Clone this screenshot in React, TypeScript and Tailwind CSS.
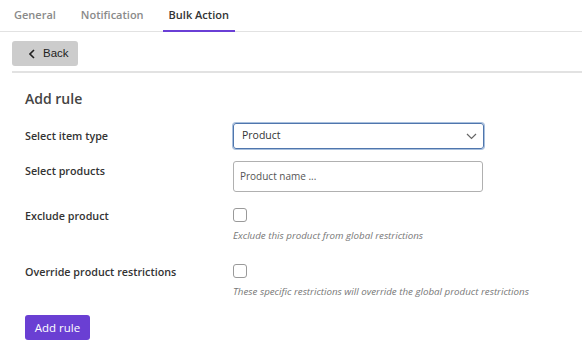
import React from "react";

export default function App() {
  const font = { fontFamily: '"Open Sans", "Noto Sans", sans-serif' };
  return (
    <div className="w-[582px] h-[362px] bg-white overflow-hidden text-[#333]" style={font}>
      <div className="flex h-[32px] border-b border-[#e2e2e2] pl-[8px] gap-[13px]">
        <div className="px-[6px] flex items-center h-[30px] text-[11px] font-semibold text-[#8a8a8a]">General</div>
        <div className="px-[6px] flex items-center h-[30px] text-[11px] font-semibold text-[#8a8a8a]">Notification</div>
        <div className="px-[6px] flex items-center h-[30px] text-[11px] font-semibold text-[#333] border-b-2 border-[#6a3fd6] box-content">Bulk Action</div>
      </div>
      <div className="ml-[12px] pt-[9px] pb-[5px] border-b-2 border-[#e2e2e2]">
        <button className="w-[66px] h-[25px] rounded-[3px] bg-[#cccccc] flex items-center pl-[17px] gap-[8px] text-[#222]" style={{ fontFamily: '"Liberation Sans", Arial, sans-serif' }}>
          <svg width="6" height="10" viewBox="0 0 6 10" fill="none"><path d="M5 1 L1 5 L5 9" stroke="#222" strokeWidth="1.6" /></svg>
          <span className="text-[11.5px]">Back</span>
        </button>
      </div>
      <div className="pl-[25px]">
        <div className="mt-[16px] text-[14px] font-semibold text-[#444] leading-[20px]">Add rule</div>
        <div className="flex items-center mt-[14px]">
          <div className="w-[208px] text-[10.75px] font-semibold text-[#333]">Select item type</div>
          <div className="w-[251px] h-[26px] rounded-[3px] border border-[#4f76ad] shadow-[0_0_0_1px_#a9c0dd] flex items-center justify-between pl-[8px] pr-[6px]">
            <span className="text-[10.5px] text-[#333]">Product</span>
            <svg width="11" height="7" viewBox="0 0 11 7" fill="none"><path d="M1 1 L5.5 5.5 L10 1" stroke="#666" strokeWidth="1.2" /></svg>
          </div>
        </div>
        <div className="flex items-start mt-[12px]">
          <div className="w-[208px] text-[10.75px] font-semibold text-[#333] pt-[2px]">Select products</div>
          <div className="w-[250px] h-[31px] rounded-[3px] border border-[#b0b0b0] flex items-center pl-[6px]">
            <span className="text-[10px] text-[#555]">Product name ...</span>
          </div>
        </div>
        <div className="flex items-start mt-[16px]">
          <div className="w-[208px] text-[10.75px] font-semibold text-[#333]">Exclude product</div>
          <div>
            <div className="w-[14px] h-[14px] rounded-[3px] border border-[#9a9a9a]" />
            <div className="mt-[7px] text-[9.75px] italic text-[#777]">Exclude this product from global restrictions</div>
          </div>
        </div>
        <div className="flex items-start mt-[20px]">
          <div className="w-[208px] text-[10.75px] font-semibold text-[#333]">Override product restrictions</div>
          <div>
            <div className="w-[14px] h-[14px] rounded-[3px] border border-[#9a9a9a]" />
            <div className="mt-[7px] text-[9.75px] italic text-[#777]">These specific restrictions will override the global product restrictions</div>
          </div>
        </div>
        <button className="mt-[16px] w-[65px] h-[25px] rounded-[3px] bg-[#6a3fd3] text-white text-[11.5px] font-medium flex items-center justify-center">Add rule</button>
      </div>
    </div>
  );
}
